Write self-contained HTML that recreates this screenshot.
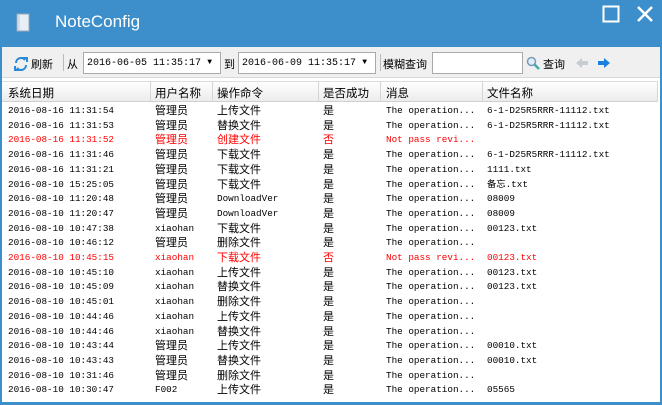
<!DOCTYPE html>
<html><head><meta charset="utf-8"><style>
*{margin:0;padding:0;box-sizing:border-box}
body{width:662px;height:405px;overflow:hidden;background:#3c8fca;font-family:"Liberation Sans","Noto Sans CJK SC",sans-serif;position:relative}
.title{position:absolute;left:55px;top:12px;color:#fff;font-size:17px}
.win{position:absolute;left:2px;top:47px;width:658px;height:355px;background:#fff}
.tb{position:absolute;left:0;top:0;width:658px;height:31px;background:#f0f0f0;border-bottom:1px solid #d8d8d8}
.tb span{position:absolute;top:9px;font-size:11px;color:#000}
.inp{position:absolute;top:5px;height:22px;background:#fff;border:1px solid #aaa;font-family:"Liberation Mono",monospace;font-size:10px;padding:5px 0 0 3px}
.inp i{position:absolute;right:8px;top:5px;font-style:normal;font-size:8px}
.hdr{position:absolute;left:0;top:34px;width:656px;height:21px;background:linear-gradient(#fff,#ececec);border-bottom:1px solid #d0d0d0;border-top:1px solid #ddd}
.hdr div{position:absolute;top:3px;font-size:11.5px;color:#000;height:20px}
.sep{position:absolute;top:34px;width:1px;height:21px;background:#d5d5d5}
.row{position:absolute;left:0;width:656px;height:14.7px;font-size:11px;white-space:nowrap}
.row div{position:absolute;top:1px;line-height:15px}
.row div.m{font-family:"Liberation Mono",monospace;font-size:9.3px;line-height:15px;top:0}
.r{color:#f00}
</style></head><body>
<svg style="position:absolute;left:16px;top:13px" width="14" height="19"><rect x="1" y="1" width="12" height="17" fill="#e8eef5" stroke="#9ab" /><line x1="3" y1="2" x2="3" y2="17" stroke="#bcd"/></svg>
<div class="title">NoteConfig</div>
<svg style="position:absolute;left:602px;top:5px" width="18" height="18"><rect x="1.5" y="1.5" width="15" height="15" fill="none" stroke="#fff" stroke-width="2"/></svg>
<svg style="position:absolute;left:636px;top:5px" width="18" height="18"><path d="M2 2L16 16M16 2L2 16" stroke="#fff" stroke-width="2.5"/></svg>
<div class="win">
<div class="tb">
<svg style="position:absolute;left:12px;top:10px" width="14" height="14"><path d="M2 6A5 5 0 0 1 11 3L9 1h4v4" fill="none" stroke="#2a8ad8" stroke-width="2"/><path d="M12 8A5 5 0 0 1 3 11L5 13H1V9" fill="none" stroke="#2a8ad8" stroke-width="2"/></svg>
<span style="left:29px">刷新</span>
<div style="position:absolute;left:61px;top:7px;width:1px;height:17px;background:#bbb"></div>
<span style="left:65px">从</span>
<div class="inp" style="left:81px;width:138px">2016-06-05 11:35:17<i>▼</i></div>
<span style="left:222px">到</span>
<div class="inp" style="left:236px;width:138px">2016-06-09 11:35:17<i>▼</i></div>
<div style="position:absolute;left:378px;top:7px;width:1px;height:17px;background:#bbb"></div>
<span style="left:381px">模糊查询</span>
<div class="inp" style="left:430px;width:91px"></div>
<svg style="position:absolute;left:524px;top:9px" width="14" height="14"><circle cx="5.5" cy="5.5" r="4" fill="#dfeefa" stroke="#7a9ab5" stroke-width="1.5"/><path d="M8.5 8.5L13 13" stroke="#4aa" stroke-width="2.5"/></svg>
<span style="left:541px">查询</span>
<svg style="position:absolute;left:573px;top:10px" width="14" height="12"><path d="M7 1L1 6L7 11V8H13V4H7Z" fill="#c5ccd3"/></svg>
<svg style="position:absolute;left:595px;top:10px" width="14" height="12"><path d="M7 1L13 6L7 11V8H1V4H7Z" fill="#1a80e0"/></svg>
</div>
<div class="hdr">
<div style="left:6px">系统日期</div><div style="left:153px">用户名称</div><div style="left:215px">操作命令</div><div style="left:321px">是否成功</div><div style="left:384px">消息</div><div style="left:485px">文件名称</div>
</div>
<div class="sep" style="left:148px"></div><div class="sep" style="left:210px"></div><div class="sep" style="left:316px"></div><div class="sep" style="left:378px"></div><div class="sep" style="left:480px"></div><div class="sep" style="left:655px"></div>
</div>
<div style="position:absolute;left:2px;top:103px">
<div class="row" style="top:0px"><div class="m" style="left:6px">2016-08-16 11:31:54</div><div style="left:153px">管理员</div><div style="left:215px">上传文件</div><div style="left:321px">是</div><div class="m" style="left:384px">The operation...</div><div class="m" style="left:485px">6-1-D25R5RRR-11112.txt</div></div>
<div class="row" style="top:14.7px"><div class="m" style="left:6px">2016-08-16 11:31:53</div><div style="left:153px">管理员</div><div style="left:215px">替换文件</div><div style="left:321px">是</div><div class="m" style="left:384px">The operation...</div><div class="m" style="left:485px">6-1-D25R5RRR-11112.txt</div></div>
<div class="row r" style="top:29.4px"><div class="m" style="left:6px">2016-08-16 11:31:52</div><div style="left:153px">管理员</div><div style="left:215px">创建文件</div><div style="left:321px">否</div><div class="m" style="left:384px">Not pass revi...</div></div>
<div class="row" style="top:44.1px"><div class="m" style="left:6px">2016-08-16 11:31:46</div><div style="left:153px">管理员</div><div style="left:215px">下载文件</div><div style="left:321px">是</div><div class="m" style="left:384px">The operation...</div><div class="m" style="left:485px">6-1-D25R5RRR-11112.txt</div></div>
<div class="row" style="top:58.8px"><div class="m" style="left:6px">2016-08-16 11:31:21</div><div style="left:153px">管理员</div><div style="left:215px">下载文件</div><div style="left:321px">是</div><div class="m" style="left:384px">The operation...</div><div class="m" style="left:485px">1111.txt</div></div>
<div class="row" style="top:73.5px"><div class="m" style="left:6px">2016-08-10 15:25:05</div><div style="left:153px">管理员</div><div style="left:215px">下载文件</div><div style="left:321px">是</div><div class="m" style="left:384px">The operation...</div><div class="m" style="left:485px">备忘.txt</div></div>
<div class="row" style="top:88.2px"><div class="m" style="left:6px">2016-08-10 11:20:48</div><div style="left:153px">管理员</div><div class="m" style="left:215px">DownloadVer</div><div style="left:321px">是</div><div class="m" style="left:384px">The operation...</div><div class="m" style="left:485px">08009</div></div>
<div class="row" style="top:102.9px"><div class="m" style="left:6px">2016-08-10 11:20:47</div><div style="left:153px">管理员</div><div class="m" style="left:215px">DownloadVer</div><div style="left:321px">是</div><div class="m" style="left:384px">The operation...</div><div class="m" style="left:485px">08009</div></div>
<div class="row" style="top:117.6px"><div class="m" style="left:6px">2016-08-10 10:47:38</div><div class="m" style="left:153px">xiaohan</div><div style="left:215px">下载文件</div><div style="left:321px">是</div><div class="m" style="left:384px">The operation...</div><div class="m" style="left:485px">00123.txt</div></div>
<div class="row" style="top:132.3px"><div class="m" style="left:6px">2016-08-10 10:46:12</div><div style="left:153px">管理员</div><div style="left:215px">删除文件</div><div style="left:321px">是</div><div class="m" style="left:384px">The operation...</div></div>
<div class="row r" style="top:147px"><div class="m" style="left:6px">2016-08-10 10:45:15</div><div class="m" style="left:153px">xiaohan</div><div style="left:215px">下载文件</div><div style="left:321px">否</div><div class="m" style="left:384px">Not pass revi...</div><div class="m" style="left:485px">00123.txt</div></div>
<div class="row" style="top:161.7px"><div class="m" style="left:6px">2016-08-10 10:45:10</div><div class="m" style="left:153px">xiaohan</div><div style="left:215px">上传文件</div><div style="left:321px">是</div><div class="m" style="left:384px">The operation...</div><div class="m" style="left:485px">00123.txt</div></div>
<div class="row" style="top:176.4px"><div class="m" style="left:6px">2016-08-10 10:45:09</div><div class="m" style="left:153px">xiaohan</div><div style="left:215px">替换文件</div><div style="left:321px">是</div><div class="m" style="left:384px">The operation...</div><div class="m" style="left:485px">00123.txt</div></div>
<div class="row" style="top:191.1px"><div class="m" style="left:6px">2016-08-10 10:45:01</div><div class="m" style="left:153px">xiaohan</div><div style="left:215px">删除文件</div><div style="left:321px">是</div><div class="m" style="left:384px">The operation...</div></div>
<div class="row" style="top:205.8px"><div class="m" style="left:6px">2016-08-10 10:44:46</div><div class="m" style="left:153px">xiaohan</div><div style="left:215px">上传文件</div><div style="left:321px">是</div><div class="m" style="left:384px">The operation...</div></div>
<div class="row" style="top:220.5px"><div class="m" style="left:6px">2016-08-10 10:44:46</div><div class="m" style="left:153px">xiaohan</div><div style="left:215px">替换文件</div><div style="left:321px">是</div><div class="m" style="left:384px">The operation...</div></div>
<div class="row" style="top:235.2px"><div class="m" style="left:6px">2016-08-10 10:43:44</div><div style="left:153px">管理员</div><div style="left:215px">上传文件</div><div style="left:321px">是</div><div class="m" style="left:384px">The operation...</div><div class="m" style="left:485px">00010.txt</div></div>
<div class="row" style="top:249.9px"><div class="m" style="left:6px">2016-08-10 10:43:43</div><div style="left:153px">管理员</div><div style="left:215px">替换文件</div><div style="left:321px">是</div><div class="m" style="left:384px">The operation...</div><div class="m" style="left:485px">00010.txt</div></div>
<div class="row" style="top:264.6px"><div class="m" style="left:6px">2016-08-10 10:31:46</div><div style="left:153px">管理员</div><div style="left:215px">删除文件</div><div style="left:321px">是</div><div class="m" style="left:384px">The operation...</div></div>
<div class="row" style="top:279.3px"><div class="m" style="left:6px">2016-08-10 10:30:47</div><div class="m" style="left:153px">F002</div><div style="left:215px">上传文件</div><div style="left:321px">是</div><div class="m" style="left:384px">The operation...</div><div class="m" style="left:485px">05565</div></div>
</div>
</body></html>
